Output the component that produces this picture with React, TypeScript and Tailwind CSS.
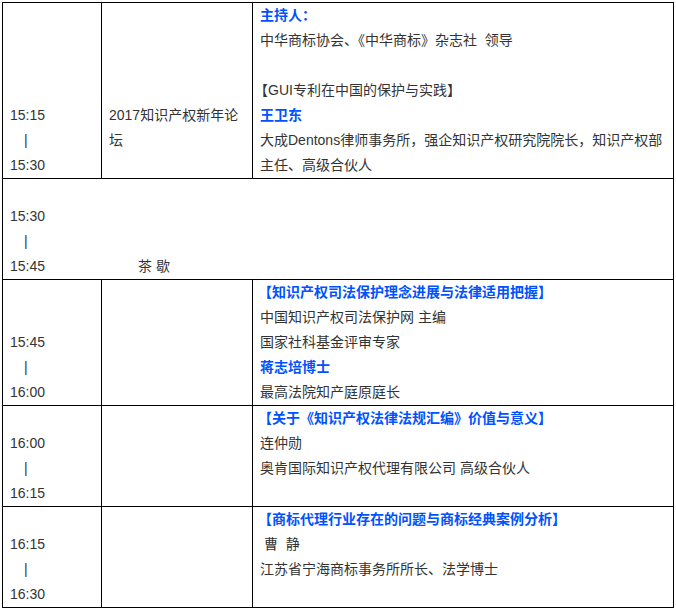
const B = ({ children }: { children: React.ReactNode }) => (
  <div className="font-bold text-[#0052ff]">{children}</div>
);
const L = ({ children }: { children?: React.ReactNode }) => <div className="h-[25px]">{children}</div>;

function Time({ a, b }: { a: string; b: string }) {
  return (
    <div>
      <L>{a}</L>
      <L><span className="pl-[14px]">|</span></L>
      <L>{b}</L>
    </div>
  );
}

export default function App() {
  const td = "border border-black align-bottom px-[7px] py-0";
  return (
    <div className="pt-[2px] pl-[2px] bg-white text-[14px] leading-[25px] text-[#333]" style={{ fontFamily: '"Liberation Sans", "Noto Sans CJK SC", sans-serif' }}>
      <table className="border-collapse w-[672px] table-fixed">
        <colgroup>
          <col className="w-[99px]" />
          <col className="w-[151px]" />
          <col />
        </colgroup>
        <tbody>
          <tr>
            <td className={td}><Time a="15:15" b="15:30" /></td>
            <td className={td}><div className="pb-[25px]">2017知识产权新年论坛</div></td>
            <td className={td}>
              <L><B>主持人：</B></L>
              <L>中华商标协会、《中华商标》杂志社&nbsp; 领导</L>
              <L />
              <L><span className="-ml-[6px]">【GUI专利在中国的保护与实践】</span></L>
              <L><B>王卫东</B></L>
              <L>大成Dentons律师事务所，强企知识产权研究院院长，知识产权部</L>
              <L>主任、高级合伙人</L>
            </td>
          </tr>
          <tr>
            <td className={td} colSpan={3}>
              <div className="pt-[25px] flex">
                <div className="w-[128px]"><Time a="15:30" b="15:45" /></div>
                <div className="self-end h-[25px]">茶&nbsp;歇</div>
              </div>
            </td>
          </tr>
          <tr>
            <td className={td}><Time a="15:45" b="16:00" /></td>
            <td className={td}></td>
            <td className={td}>
              <L><B><span className="-ml-[2px]">【知识产权司法保护理念进展与法律适用把握】</span></B></L>
              <L>中国知识产权司法保护网 主编</L>
              <L>国家社科基金评审专家</L>
              <L><B>蒋志培博士</B></L>
              <L>最高法院知产庭原庭长</L>
            </td>
          </tr>
          <tr>
            <td className={td}><Time a="16:00" b="16:15" /></td>
            <td className={td}></td>
            <td className={td}>
              <L><B><span className="-ml-[2px]">【关于《知识产权法律法规汇编》价值与意义】</span></B></L>
              <L>连仲勋</L>
              <L>奥肯国际知识产权代理有限公司 高级合伙人</L>
              <L />
            </td>
          </tr>
          <tr>
            <td className={td}><Time a="16:15" b="16:30" /></td>
            <td className={td}></td>
            <td className={td}>
              <L><B><span className="-ml-[2px]">【商标代理行业存在的问题与商标经典案例分析】</span></B></L>
              <L>&nbsp;曹&nbsp; 静</L>
              <L>江苏省宁海商标事务所所长、法学博士</L>
              <L />
            </td>
          </tr>
        </tbody>
      </table>
    </div>
  );
}
